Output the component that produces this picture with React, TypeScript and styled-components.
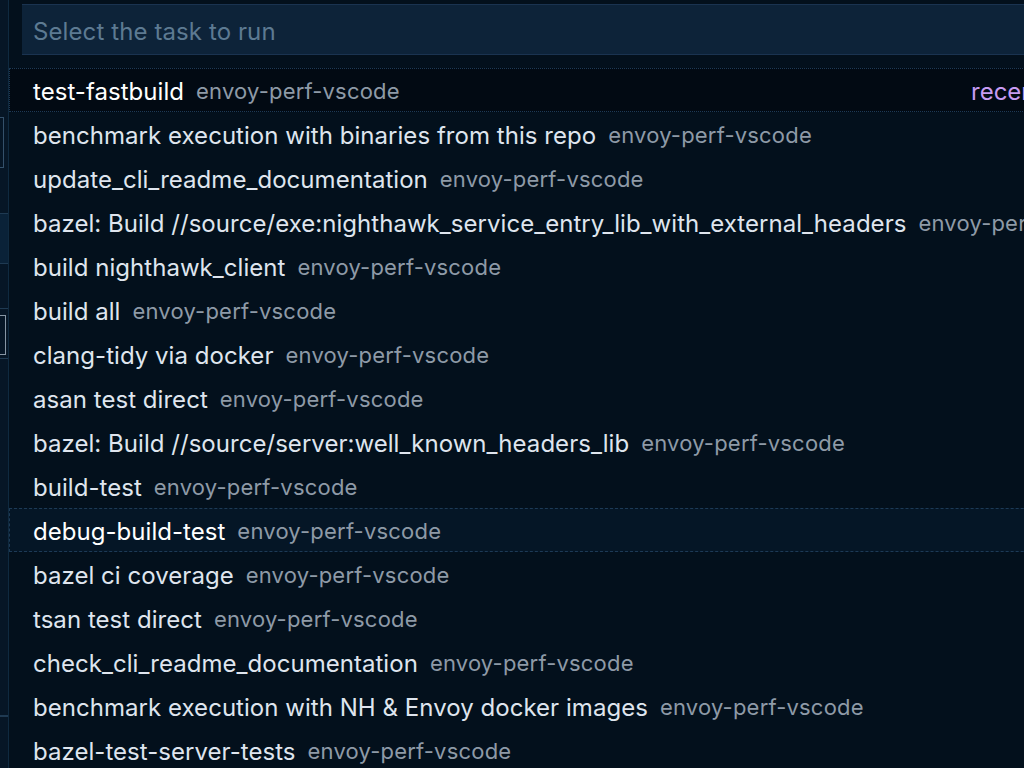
import React from "react";
import styled, { createGlobalStyle } from "styled-components";

const Global = createGlobalStyle`
  html, body { margin: 0; padding: 0; background: #03101c; overflow: hidden; }
  body { font-family: "Inter", "Noto Sans", sans-serif; }
`;

const Screen = styled.div`
  display: flex;
  width: 1024px;
  height: 768px;
  overflow: hidden;
`;

const Strip = styled.div`
  width: 8px;
  flex: none;
  background: #061626;
  border-right: 1px solid #0f2a40;
  display: flex;
  flex-direction: column;
`;

const StripBox = styled.div<{ $top: number; $h: number; $w: number; $c: string }>`
  flex: none;
  margin-top: ${(p) => p.$top}px;
  height: ${(p) => p.$h}px;
  width: ${(p) => p.$w}px;
  border: 1px solid ${(p) => p.$c};
  border-left: none;
  box-sizing: border-box;
`;

const StripBand = styled.div<{ $top: number; $h: number; $bg: string }>`
  flex: none;
  margin-top: ${(p) => p.$top}px;
  height: ${(p) => p.$h}px;
  background: ${(p) => p.$bg};
  border-top: 1px solid #1f3a52;
  border-bottom: 1px solid #1f3a52;
`;

const Panel = styled.div`
  flex: none;
  width: 1200px;
  background: #03101c;
  padding-top: 4px;
  display: flex;
  flex-direction: column;
`;

const InputBox = styled.div`
  flex: none;
  margin-left: 13px;
  height: 51px;
  box-sizing: border-box;
  background: #0d2339;
  border-top: 1px solid #1a3350;
  border-bottom: 1px solid #1a3350;
  display: flex;
  align-items: center;
  padding: 3px 0 0 11px;
  font-size: 24px;
  letter-spacing: 0.1px;
  color: #5d7a92;
`;

const List = styled.div`
  flex: none;
  margin-top: 13px;
  display: flex;
  flex-direction: column;
`;

const Row = styled.div<{ $mode?: "focus" | "hover" }>`
  flex: none;
  height: 44px;
  box-sizing: border-box;
  display: flex;
  align-items: center;
  padding: 2px 0 0 23px;
  gap: 12px;
  white-space: nowrap;
  border: 1px ${(p) => (p.$mode === "focus" ? "dotted" : "dashed")}
    ${(p) => (p.$mode ? "#1d3a56" : "transparent")};
  background: ${(p) => (p.$mode === "focus" ? "#020a13" : p.$mode === "hover" ? "#051626" : "transparent")};
  position: relative;
`;

const Label = styled.span<{ $bright?: boolean }>`
  font-size: 24px;
  letter-spacing: 0.04px;
  color: ${(p) => (p.$bright ? "#ffffff" : "#dfe5ee")};
`;

const Desc = styled.span`
  font-size: 22px;
  letter-spacing: 0.2px;
  color: #8e9aa7;
`;

const Tag = styled.span`
  position: absolute;
  left: 961px;
  font-size: 24px;
  color: #c79bf2;
`;

const rows: [string, string][] = [
  ["test-fastbuild", "envoy-perf-vscode"],
  ["benchmark execution with binaries from this repo", "envoy-perf-vscode"],
  ["update_cli_readme_documentation", "envoy-perf-vscode"],
  ["bazel: Build //source/exe:nighthawk_service_entry_lib_with_external_headers", "envoy-perf-vscode"],
  ["build nighthawk_client", "envoy-perf-vscode"],
  ["build all", "envoy-perf-vscode"],
  ["clang-tidy via docker", "envoy-perf-vscode"],
  ["asan test direct", "envoy-perf-vscode"],
  ["bazel: Build //source/server:well_known_headers_lib", "envoy-perf-vscode"],
  ["build-test", "envoy-perf-vscode"],
  ["debug-build-test", "envoy-perf-vscode"],
  ["bazel ci coverage", "envoy-perf-vscode"],
  ["tsan test direct", "envoy-perf-vscode"],
  ["check_cli_readme_documentation", "envoy-perf-vscode"],
  ["benchmark execution with NH & Envoy docker images", "envoy-perf-vscode"],
  ["bazel-test-server-tests", "envoy-perf-vscode"],
];

export default function App() {
  return (
    <>
      <Global />
      <Screen>
        <Strip>
          <StripBox $top={117} $h={51} $w={4} $c="#34506a" />
          <StripBand $top={45} $h={49} $bg="#0a2238" />
          <StripBand $top={44} $h={49} $bg="#061626" />
          <StripBox $top={-44} $h={40} $w={6} $c="#8796a4" />
          <StripBand $top={360} $h={0} $bg="#061626" />
        </Strip>
        <Panel>
          <InputBox>Select the task to run</InputBox>
          <List>
            {rows.map(([l, d], i) => (
              <Row key={i} $mode={i === 0 ? "focus" : i === 10 ? "hover" : undefined}>
                <Label $bright={i === 0 || i === 10}>{l}</Label>
                <Desc>{d}</Desc>
                {i === 0 && <Tag>recently used</Tag>}
              </Row>
            ))}
          </List>
        </Panel>
      </Screen>
    </>
  );
}
